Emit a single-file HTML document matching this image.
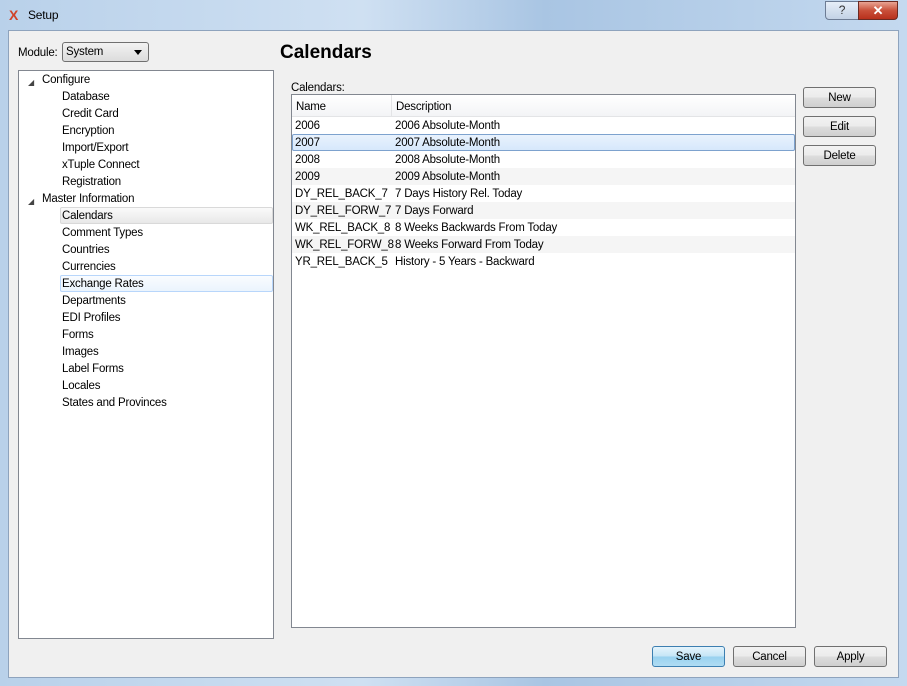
<!DOCTYPE html>
<html><head><style>
*{margin:0;padding:0;box-sizing:border-box}
body{width:907px;height:686px;position:relative;overflow:hidden;font-family:"Liberation Sans",sans-serif;font-size:11.5px;letter-spacing:-0.2px;color:#000;background:linear-gradient(90deg,#b9d1ea,#cfe0f2 40%,#a9c5e3 60%,#c4d9ef);}
.a{position:absolute}
.client{left:8px;top:30px;width:891px;height:648px;background:#f0f0f0;border:1px solid #8ea3bd}
.btn{position:absolute;border:1px solid #707070;border-radius:3px;background:linear-gradient(#f2f2f2 0,#ebebeb 50%,#dddddd 51%,#cfcfcf);text-align:center;line-height:21px}
.tree{left:18px;top:70px;width:256px;height:569px;background:#fff;border:1px solid #828790}
.ti{position:absolute;left:43px;height:17px;line-height:19px;white-space:nowrap}
.list{left:291px;top:94px;width:505px;height:534px;background:#fff;border:1px solid #828790}
.row{position:absolute;left:0;width:503px;height:17px;line-height:19px;white-space:nowrap}
.row span{position:absolute;left:3px}
.row span+span{left:103px}
.alt{background:#f5f5f5}
</style></head><body>
<div class="a" style="left:9px;top:7px;font-weight:bold;font-size:14px;color:#d0442a">X</div>
<div class="a" style="left:28px;top:8px;font-size:12px">Setup</div>
<div class="a" style="left:825px;top:1px;width:34px;height:19px;border:1px solid #6d7c94;border-radius:0 0 0 4px;background:linear-gradient(#e6eef8,#c3d2e5);text-align:center;font-size:12px;line-height:17px;color:#333">?</div>
<div class="a" style="left:858px;top:1px;width:40px;height:19px;border:1px solid #6b2a22;border-radius:0 0 4px 0;background:linear-gradient(#e8a493,#c9503a 50%,#b8301c);text-align:center;color:#fff;font-weight:bold;font-size:13px;line-height:17px">✕</div>
<div class="a client"></div>
<div class="a" style="left:18px;top:47px">Module:</div>
<div class="a" style="left:62px;top:42px;width:87px;height:20px;border:1px solid #707070;border-radius:3px;background:linear-gradient(#f2f2f2,#dcdcdc);padding-left:3px;line-height:19px">System<span style="position:absolute;right:6px;top:7px;width:0;height:0;border-left:4px solid transparent;border-right:4px solid transparent;border-top:5px solid #000"></span></div>
<div class="a" style="left:280px;top:42px;font-size:19px;font-weight:bold;letter-spacing:0">Calendars</div>
<div class="a tree">
<div class="ti" style="left:9px;top:2px;font-size:8px;color:#444">◢</div>
<div class="ti" style="left:23px;top:0">Configure</div>
<div class="ti" style="top:17px">Database</div>
<div class="ti" style="top:34px">Credit Card</div>
<div class="ti" style="top:51px">Encryption</div>
<div class="ti" style="top:68px">Import/Export</div>
<div class="ti" style="top:85px">xTuple Connect</div>
<div class="ti" style="top:102px">Registration</div>
<div class="ti" style="left:9px;top:121px;font-size:8px;color:#444">◢</div>
<div class="ti" style="left:23px;top:119px">Master Information</div>
<div class="a" style="left:41px;top:136px;width:213px;height:17px;border:1px solid #d9d9d9;border-radius:2px;background:linear-gradient(#fafafa,#e8e8e8)"></div>
<div class="ti" style="top:136px">Calendars</div>
<div class="ti" style="top:153px">Comment Types</div>
<div class="ti" style="top:170px">Countries</div>
<div class="ti" style="top:187px">Currencies</div>
<div class="a" style="left:41px;top:204px;width:213px;height:17px;border:1px solid #b8d6fb;border-radius:2px;background:linear-gradient(#fafcff,#ebf4fd)"></div>
<div class="ti" style="top:204px">Exchange Rates</div>
<div class="ti" style="top:221px">Departments</div>
<div class="ti" style="top:238px">EDI Profiles</div>
<div class="ti" style="top:255px">Forms</div>
<div class="ti" style="top:272px">Images</div>
<div class="ti" style="top:289px">Label Forms</div>
<div class="ti" style="top:306px">Locales</div>
<div class="ti" style="top:323px">States and Provinces</div>
</div>
<div class="a" style="left:291px;top:82px">Calendars:</div>
<div class="a list">
<div class="a" style="left:0;top:0;width:503px;height:22px;background:linear-gradient(#fff,#f3f4f6);border-bottom:1px solid #e3e4e6"></div>
<div class="a" style="left:99px;top:0;width:1px;height:22px;background:#e3e4e6"></div>
<div class="a" style="left:4px;top:6px">Name</div>
<div class="a" style="left:104px;top:6px">Description</div>
<div class="row" style="top:22px"><span>2006</span><span>2006 Absolute-Month</span></div>
<div class="row" style="top:39px;background:linear-gradient(#eaf3fd,#d5e7fb);box-shadow:inset 0 0 0 1px #7da2ce;border-radius:2px"><span>2007</span><span>2007 Absolute-Month</span></div>
<div class="row" style="top:56px"><span>2008</span><span>2008 Absolute-Month</span></div>
<div class="row alt" style="top:73px"><span>2009</span><span>2009 Absolute-Month</span></div>
<div class="row" style="top:90px"><span>DY_REL_BACK_7</span><span>7 Days History Rel. Today</span></div>
<div class="row alt" style="top:107px"><span>DY_REL_FORW_7</span><span>7 Days Forward</span></div>
<div class="row" style="top:124px"><span>WK_REL_BACK_8</span><span>8 Weeks Backwards From Today</span></div>
<div class="row alt" style="top:141px"><span>WK_REL_FORW_8</span><span>8 Weeks Forward From Today</span></div>
<div class="row" style="top:158px"><span>YR_REL_BACK_5</span><span>History - 5 Years - Backward</span></div>
</div>
<div class="btn" style="left:803px;top:87px;width:73px;height:21px">New</div>
<div class="btn" style="left:803px;top:116px;width:73px;height:21px">Edit</div>
<div class="btn" style="left:803px;top:145px;width:73px;height:21px">Delete</div>
<div class="btn" style="left:652px;top:646px;width:73px;height:21px;border-color:#3c7fb1;background:linear-gradient(#e5f4fc,#c4e5f6 50%,#98d1ef 51%,#b0dcf3)">Save</div>
<div class="btn" style="left:733px;top:646px;width:73px;height:21px">Cancel</div>
<div class="btn" style="left:814px;top:646px;width:73px;height:21px">Apply</div>
</body></html>
